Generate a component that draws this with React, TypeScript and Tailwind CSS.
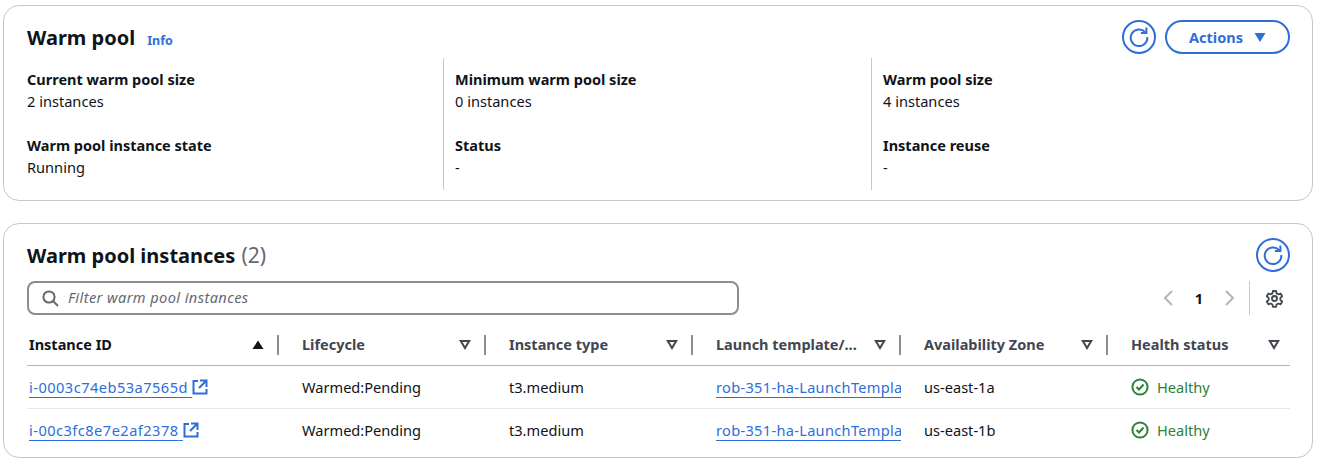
import React from "react";

const Refresh = ({ size = 34 }: { size?: number }) => (
  <button className="shrink-0 rounded-full border-2 border-[#2e6ed9] flex items-center justify-center bg-white" style={{ width: size, height: size }}>
    <svg width="20" height="20" viewBox="0 0 20 20" fill="none" stroke="#2e6ed9" strokeWidth="2">
      <path d="M16.2 5.2A8.3 8.3 0 1 0 18.3 10" strokeLinecap="butt" />
      <path d="M17.4 0.6V6.1H11.9" />
    </svg>
  </button>
);

const Filter = () => (
  <svg width="12" height="10" viewBox="0 0 12 10" fill="none" stroke="#424650" strokeWidth="2" strokeLinejoin="miter" className="block">
    <path d="M1.8 1H10.2L6 8Z" />
  </svg>
);

const External = () => (
  <svg width="16" height="16" viewBox="0 0 16 16" fill="none" stroke="#2e6ed9" strokeWidth="2" className="shrink-0 -mt-[1px]">
    <path d="M6 2H1.5V14.5H14.5V10" />
    <path d="M8 1.5H14.5V8M14 2L7 9" />
  </svg>
);

const Check = () => (
  <svg width="18" height="18" viewBox="0 0 18 18" fill="none" stroke="#2b8136" strokeWidth="2">
    <circle cx="9" cy="9" r="7.6" />
    <path d="M5.5 9L8 11.5L12.5 6.5" />
  </svg>
);

const Gear = () => (
  <svg width="19" height="19" viewBox="0 0 24 24" fill="none" stroke="#424650" strokeWidth="2.3" strokeLinejoin="round" className="block">
    <path d="M10 2.5h4l.6 3 2.2 1.2 2.9-1 2 3.5-2.3 2v2.6l2.3 2-2 3.5-2.9-1-2.2 1.2-.6 3h-4l-.6-3-2.2-1.2-2.9 1-2-3.5 2.3-2v-2.6l-2.3-2 2-3.5 2.9 1 2.2-1.2z" />
    <circle cx="12" cy="12" r="3.2" />
  </svg>
);

const Field = ({ label, value }: { label: string; value: string }) => (
  <div className="h-[44px]">
    <div className="font-bold text-[14.5px] leading-[22px] text-[#0f141a]">{label}</div>
    <div className="leading-[22px] text-[#0f141a]">{value}</div>
  </div>
);

const columns = [
  { label: "Instance ID", dark: true },
  { label: "Lifecycle" },
  { label: "Instance type" },
  { label: "Launch template/..." },
  { label: "Availability Zone" },
  { label: "Health status", last: true },
];

const rows = [
  { id: "i-0003c74eb53a7565d", zone: "us-east-1a" },
  { id: "i-00c3fc8e7e2af2378", zone: "us-east-1b" },
];

const gridCols = "grid grid-cols-[273px_207px_207px_208px_207px_161px]";

export default function App() {
  return (
    <div className="w-[1319px] h-[463px] bg-white pl-[3px] pr-[6px] pt-[5px] text-[14.6px] text-[#0f141a] overflow-hidden" style={{ fontFamily: '"Noto Sans", sans-serif' }}>
      <section className="h-[196px] rounded-[16px] border border-[#c6c6cd] pl-[23px] pr-[22px] pt-[14px]">
        <div className="flex items-start justify-between h-[38px]">
          <div className="flex items-baseline gap-[12px] pt-[1px]">
            <h2 className="text-[20px] font-bold leading-[34px] text-[#0f141a]">Warm pool</h2>
            <span className="text-[12.5px] font-bold text-[#2e6ed9]">Info</span>
          </div>
          <div className="flex items-center gap-[9px]">
            <Refresh />
            <button className="h-[34px] w-[125px] rounded-full border-2 border-[#2e6ed9] flex items-center justify-center gap-[11px] pt-[1px] text-[#2e6ed9] font-bold text-[14.5px]">
              Actions
              <svg width="12" height="9" viewBox="0 0 12 9"><path d="M0.5 0H11.5L6 9Z" fill="#2e6ed9" /></svg>
            </button>
          </div>
        </div>
        <div className="grid grid-cols-[416px_428px_1fr]">
          <div className="flex flex-col gap-[22px] pt-[10px] h-[132px]">
            <Field label="Current warm pool size" value="2 instances" />
            <Field label="Warm pool instance state" value="Running" />
          </div>
          <div className="flex flex-col gap-[22px] pt-[10px] h-[132px] border-l border-[#c6c6cd] pl-[11px]">
            <Field label="Minimum warm pool size" value="0 instances" />
            <Field label="Status" value="-" />
          </div>
          <div className="flex flex-col gap-[22px] pt-[10px] h-[132px] border-l border-[#c6c6cd] pl-[11px]">
            <Field label="Warm pool size" value="4 instances" />
            <Field label="Instance reuse" value="-" />
          </div>
        </div>
      </section>

      <section className="mt-[22px] h-[235px] rounded-[16px] border border-[#c6c6cd] pl-[23px] pr-[22px] pt-[14px]">
        <div className="flex items-start justify-between h-[43px]">
          <h2 className="text-[20px] font-bold leading-[35px] text-[#0f141a]">
            Warm pool instances <span className="font-normal text-[#656871] text-[21px] ml-[1px]">(2)</span>
          </h2>
          <Refresh />
        </div>
        <div className="flex items-center justify-between h-[34px]">
          <div className="w-[712px] h-[34px] rounded-[8px] border-2 border-[#8c8c94] flex items-center pl-[13px] gap-[9px]">
            <svg width="17" height="17" viewBox="0 0 17 17" fill="none" stroke="#656871" strokeWidth="2">
              <circle cx="7" cy="7" r="5.6" />
              <path d="M11 11L16 16" />
            </svg>
            <span className="italic text-[#656871] tracking-[0.4px]">Filter warm pool instances</span>
          </div>
          <div className="flex items-center h-[34px]">
            <svg width="10" height="16" viewBox="0 0 10 16" fill="none" stroke="#b4b4bb" strokeWidth="2"><path d="M9 1L2 8L9 15" /></svg>
            <span className="w-[52px] text-center font-bold pt-[1px]">1</span>
            <svg width="10" height="16" viewBox="0 0 10 16" fill="none" stroke="#b4b4bb" strokeWidth="2"><path d="M1 1L8 8L1 15" /></svg>
            <div className="ml-[14px] w-px h-[34px] bg-[#c6c6cd]" />
            <div className="ml-[15px] mr-[6px]"><Gear /></div>
          </div>
        </div>
        <div className={`${gridCols} h-[48px] mt-[3px] border-b border-[#b4b4bb]`}>
          {columns.map((c) => (
            <div key={c.label} className="relative flex items-center pl-[2px] pt-[6px]">
              <span className={`font-bold text-[14.5px] ${c.dark ? "text-[#0f141a]" : "text-[#424650]"}`}>{c.label}</span>
              <span className={`absolute top-[22px] ${c.last ? "right-[10px]" : "right-[36px]"}`}>
                {c.dark ? (
                  <svg width="12" height="10" viewBox="0 0 12 10" className="block"><path d="M0.5 9H11.5L6 0.5Z" fill="#0f141a" /></svg>
                ) : (
                  <Filter />
                )}
              </span>
              {!c.last && <span className="absolute right-[21px] top-[17px] h-[20px] w-[2px] bg-[#8c8c94]" />}
            </div>
          ))}
        </div>
        {rows.map((r, i) => (
          <div key={r.id} className={`${gridCols} h-[43px] items-center ${i === 0 ? "border-b border-[#e8e8ec] pt-[1px]" : ""}`}>
            <div className="pl-[2px] flex items-center">
              <a className="text-[#2e6ed9] underline underline-offset-[4px] flex items-center tracking-[0.47px]">
                <span>{r.id}&nbsp;</span>
                <External />
              </a>
            </div>
            <div className="pl-[2px]">Warmed:Pending</div>
            <div className="pl-[2px]">t3.medium</div>
            <div className="pl-[2px]">
              <div className="w-[185px] overflow-hidden whitespace-nowrap text-[#2e6ed9] underline underline-offset-[4px] tracking-[0.3px]">rob-351-ha-LaunchTempla</div>
            </div>
            <div className="pl-[2px]">{r.zone}</div>
            <div className="pl-[2px] flex items-center gap-[8px] text-[#2b8136]">
              <Check />
              Healthy
            </div>
          </div>
        ))}
      </section>
    </div>
  );
}
